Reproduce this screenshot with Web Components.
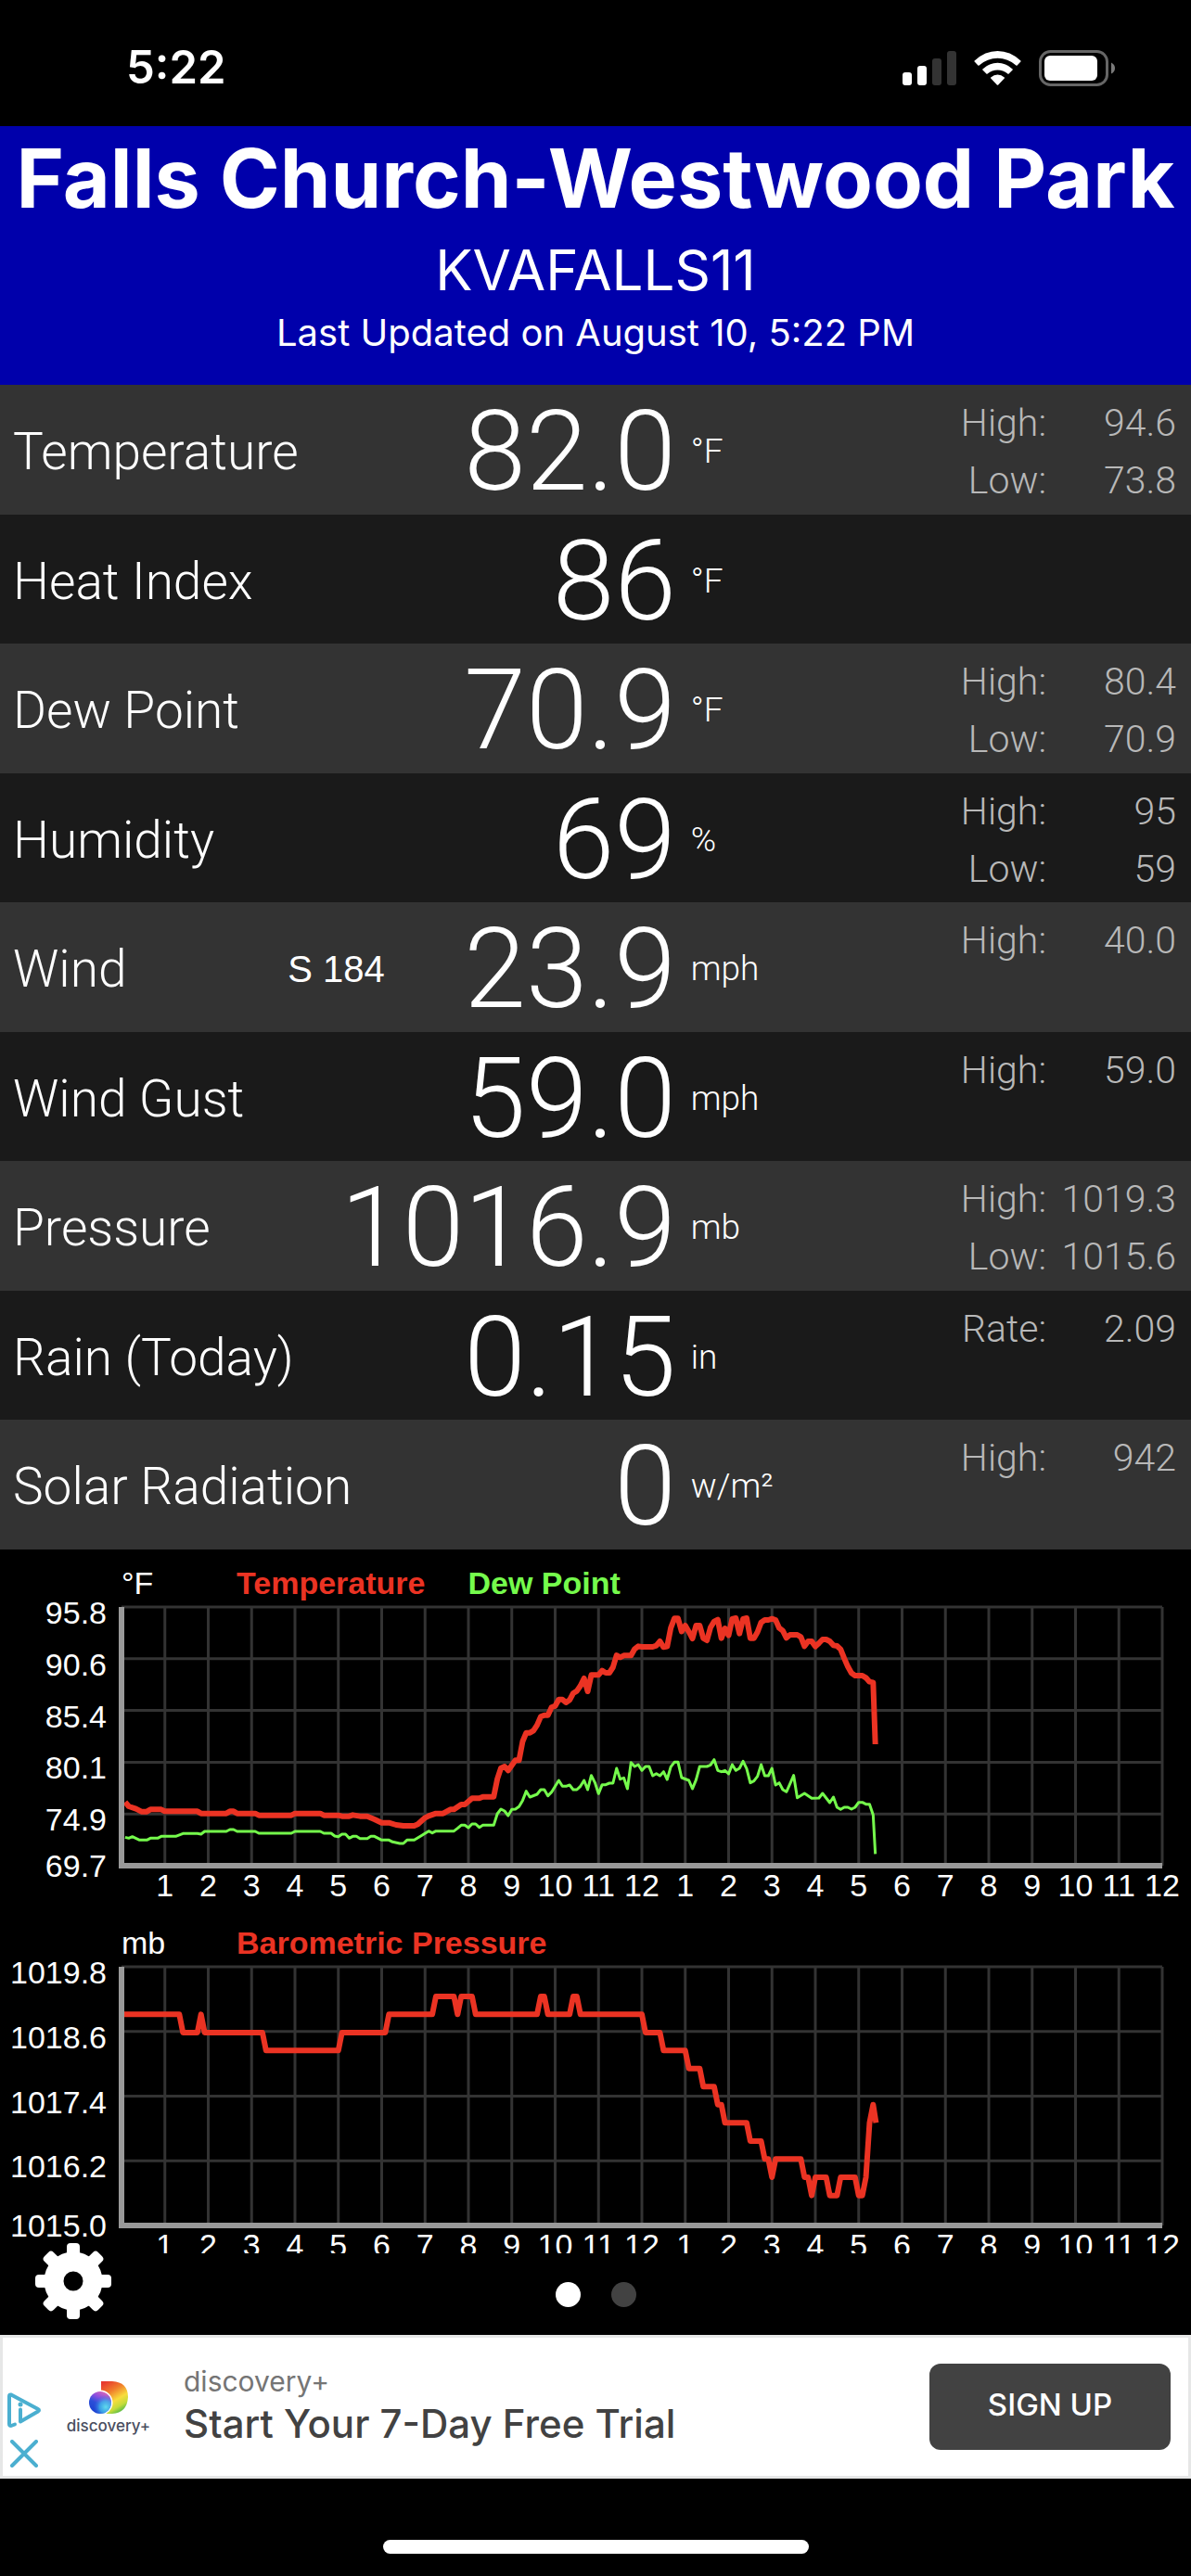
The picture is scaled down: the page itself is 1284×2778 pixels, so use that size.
<!DOCTYPE html>
<html lang="en">
<head>
<meta charset="utf-8">
<meta name="viewport" content="width=device-width, initial-scale=1">
<title>Weather Station</title>
<style>
  html, body { margin: 0; background: #000; }
  body { font-family: "Liberation Sans", sans-serif; color: #fff; }
</style>
</head>
<body>
<weather-app>
  <status-bar>5:22</status-bar>
  <station-header>
    <span slot="name">Falls Church-Westwood Park</span>
    <span slot="id">KVAFALLS11</span>
    <span slot="updated">Last Updated on August 10, 5:22 PM</span>
  </station-header>
  <reading-list>
    <reading-row label="Temperature" value="82.0" unit="°F" stats="High: 94.6|Low: 73.8"></reading-row>
    <reading-row label="Heat Index" value="86" unit="°F"></reading-row>
    <reading-row label="Dew Point" value="70.9" unit="°F" stats="High: 80.4|Low: 70.9"></reading-row>
    <reading-row label="Humidity" value="69" unit="%" stats="High: 95|Low: 59"></reading-row>
    <reading-row label="Wind" detail="S 184" value="23.9" unit="mph" stats="High: 40.0"></reading-row>
    <reading-row label="Wind Gust" value="59.0" unit="mph" stats="High: 59.0"></reading-row>
    <reading-row label="Pressure" value="1016.9" unit="mb" stats="High: 1019.3|Low: 1015.6"></reading-row>
    <reading-row label="Rain (Today)" value="0.15" unit="in" stats="Rate: 2.09"></reading-row>
    <reading-row label="Solar Radiation" value="0" unit="w/m²" stats="High: 942"></reading-row>
  </reading-list>
  <chart-stack>
    <day-chart unit="°F" ticks="95.8,90.6,85.4,80.1,74.9,69.7" series="temperature,dewPoint"></day-chart>
    <day-chart unit="mb" ticks="1019.8,1018.6,1017.4,1016.2,1015.0" series="pressure"></day-chart>
  </chart-stack>
  <page-controls></page-controls>
  <ad-banner>
    <span slot="brand">discovery+</span>
    <span slot="headline">Start Your 7-Day Free Trial</span>
    <span slot="action">SIGN UP</span>
  </ad-banner>
  <home-indicator></home-indicator>
</weather-app>

<script>
// Day series. Each pair is (five-minute sample index, depth below the top grid line in 1/837 of the plot height).
const SERIES = {
  temperature: { name: 'Temperature', color: '#eb3323', width: 6, points: '1,631 2,645 4,653 5.5,662 7,662 8,655 11,655 12,661 21,661 22,668 29,668 30,661 31,661 32,668 37,668 38,674 47,674 48,668 55,668 56,674 60,674 61,677 63,677 64,673 66,677 68,677 70,687 72,698 74,698 76,705 78,708 81,708 82,703 84,682 85,676 87,668 89,668 91,655 92,655 94,639 95,639 97,619 99,619 100,614 103,614 104,556 105,521 106,516 107,529 109,496 110,496 111,435 112,407 113,407 114,400 115,382 116,355 117,350 118,350 119,325 120,320 121,299 122,299 123,309 124,301 125,279 126,272 127,255 128,231 129,273 130,220 132,220 133,206 134,213 135,213 136,195 137,156 138,163 139,157 141,157 142,136 143,127 144,129 147,129 148,125 149,111 150,130 151,128 152,68 153,37 154,37 155,79 156,60 157,80 158,102 159,60 160,60 161,101 162,108 163,66 164,47 165,41 166,101 167,69 168,92 169,39 170,36 171,86 172,39 173,36 174,101 175,101 176,81 177,50 178,42 179,42 180,38 181,42 182,68 183,77 184,100 185,90 187,90 188,97 189,127 190,111 191,111 192,128 193,117 194,105 195,105 196,111 197,124 198,126 199,137 200,166 201,193 202,214 203,222 205,222 206,229 207,242 208,244 208.6,444' },
  dewPoint: { name: 'Dew Point', color: '#75fb4c', width: 3, points: '1,745 2,748 3,743 5,754 7,754 8,748 10,748 11,742 15,742 17,733 21,733 22,735 23,726 29,726 30,720 31,720 32,726 37,726 38,732 47,732 48,726 55,726 56,732 58,732 59,741 60,743 61,735 62,735 63,748 64,742 65,742 66,749 68,749 69,742 70,742 72,754 74,754 75,760 77,765 78,765 79,754 81,754 82.5,743 85,725 86,731 87,725 92,725 93,716 94,706 95,706 96,714 97,702 98,702 99,713 100,706 103,706 104,669 105,654 106,660 107,675 108,655 109,654 110,646 111,626 112,596 113,615 115,606 116,591 117,591 118,611 119,599 121,561 122,580 123,580 124,576 125,591 126,591 127,580 128,561 129,591 130,545 131,568 132,604 133,575 134,575 135,570 136,570 137,522 138,557 139,553 140,588 141,503 142,516 143,510 144,529 145,516 146,516 147,546 148,539 149,546 150,533 151,558 152,517 153,502 154,502 155,552 157,561 158,588 159,559 160,516 162,516 163,511 164,494 165,529 166,533 167,529 168,540 169,510 170,529 171,522 172,499 173,523 174,569 175,563 176,548 177,510 178,546 179,546 180,522 181,576 182,569 183,591 184,598 185,572 186,545 187,617 189,603 191,619 193,618 194,603 196,633 197,615 198,648 199,655 200,648 201,648 202,654 203,648 204,632 205,632 206,638 207,638 208,673 208.6,799' },
  pressure: { name: 'Barometric Pressure', color: '#eb3323', width: 6, points: '0,154 16,154 17,213 21,213 22,154 23,213 39,213 40,271 60,271 61,213 73,213 74,154 86,154 87,96 92,96 93,154 94,96 97,96 98,154 115,154 116,96 117,96 118,154 124,154 125,96 126,96 127,154 144,154 145,213 149,213 150,271 156,271 157,329 160,329 161,388 164,388 165,446 166,446 167,505 173,505 174,564 177,564 178,622 179,622 180,681 181,622 188,622 189,681 190,681 191,740 192,681 195,681 196,740 198,740 199,681 203,681 204,740 205,740 206,681 207,505 208,446 208.8,505' }
};

class BaseElement extends HTMLElement {
  connectedCallback() {
    if (!this.shadowRoot) this.attachShadow({ mode: 'open' }).innerHTML = this.render();
  }
}

customElements.define('weather-app', class extends BaseElement {
  render() {
    return `<style>
      :host { display: flex; flex-direction: column; min-height: 100vh; background: #000; }
    </style><slot></slot>`;
  }
});

customElements.define('status-bar', class extends BaseElement {
  render() {
    return `<style>
      :host { display: flex; align-items: center; justify-content: space-between; box-sizing: border-box;
        height: 136px; padding: 10px 82px 0 136px; background: #000; font: 600 49px/60px Inter, sans-serif; }
      svg { display: block; }
    </style>
    <span><slot></slot></span>
    <svg width="229" height="39" viewBox="0 0 229 39" role="img" aria-label="Signal, Wi-Fi, battery">
      <g fill="#fff">
        <rect x="0" y="24" width="10" height="14" rx="3"/>
        <rect x="16" y="17" width="10" height="21" rx="3"/>
        <rect x="32" y="9" width="10" height="29" rx="3" fill="#333"/>
        <rect x="48" y="1" width="10" height="37" rx="3" fill="#333"/>
        <path d="M77.6 11.4 Q89 1 102.500 1 Q116 1 127.400 11.400 Q127.900 12 127.400 12.600 L123.600 16.400 Q123 17 122.400 16.400 Q113.500 8.700 102.500 8.700 Q91.500 8.700 82.600 16.400 Q82 17 81.400 16.400 L77.600 12.600 Q77.100 12 77.600 11.400 Z"/>
        <path d="M86.400 20.400 Q93.600 13.800 102.500 13.800 Q111.400 13.800 118.600 20.400 Q119.200 21 118.600 21.600 L114.600 25.600 Q114 26.200 113.400 25.600 Q108.500 21.400 102.500 21.400 Q96.500 21.400 91.600 25.600 Q91 26.200 90.400 25.600 L86.400 21.600 Q85.800 21 86.400 20.400 Z"/>
        <path d="M95.200 29.400 Q98.500 26.500 102.500 26.500 Q106.500 26.500 109.800 29.400 Q110.400 30 109.800 30.600 L103.200 37.400 Q102.500 38.100 101.800 37.400 L95.200 30.600 Q94.600 30 95.200 29.400 Z"/>
        <rect x="153" y="6" width="57" height="27" rx="6"/>
      </g>
      <rect x="148.500" y="1.500" width="72" height="36" rx="11" fill="none" stroke="#666" stroke-width="3"/>
      <path d="M225 13.500 Q229 15.500 229 19.500 Q229 23.500 225 25.500 Z" fill="#7a7a7a"/>
    </svg>`;
  }
});

customElements.define('station-header', class extends BaseElement {
  render() {
    return `<style>
      :host { display: block; background: #0000ab; padding-bottom: 31px; text-align: center; white-space: nowrap;
        font-family: Inter, sans-serif; }
      h1, h2, p { margin: 0; font-weight: 400; }
      h1 { font-weight: 700; font-size: 88px; line-height: 112px; }
      h2 { font-size: 60px; line-height: 86px; }
      p { font-size: 40px; line-height: 50px; }
    </style>
    <h1><slot name="name"></slot></h1>
    <h2><slot name="id"></slot></h2>
    <p><slot name="updated"></slot></p>`;
  }
});

customElements.define('reading-list', class extends BaseElement {
  render() {
    return `<style>
      :host { display: block; }
      ::slotted(:nth-child(odd)) { --row-bg: #333; --row-height: 140px; }
      ::slotted(:nth-child(even)) { --row-bg: #1a1a1a; --row-height: 139px; }
    </style><slot></slot>`;
  }
});

customElements.define('reading-row', class extends BaseElement {
  render() {
    const a = n => this.getAttribute(n) || '';
    const stats = a('stats').split('|').filter(Boolean).map(s => {
      const [k, v] = s.split(' ');
      return `<dt>${k}</dt><dd>${v}</dd>`;
    }).join('');
    return `<style>
      :host { display: flex; align-items: center; box-sizing: border-box; height: var(--row-height);
        padding: 4px 16px 0 14px; background: var(--row-bg); font-family: Roboto, "Liberation Sans", sans-serif; font-weight: 300; }
      .main { display: flex; align-items: center; width: 57%; }
      .label { font-size: 55px; line-height: 64px; white-space: nowrap; }
      .detail { margin-left: auto; font: 400 40px/48px "Liberation Sans", sans-serif; white-space: nowrap; }
      .value { min-width: 230px; margin-left: auto; font-size: 120px; line-height: 136px; text-align: right; }
      .detail + .value { margin-left: 84px; }
      .unit { flex: 1; padding-left: 16px; font-size: 37px; line-height: 46px; }
      dl { align-self: flex-start; display: grid; grid-template-columns: auto 140px; margin: 0; padding-top: 6px;
        font-size: 41px; line-height: 62px; text-align: right; color: #b8b8b8; }
      dd { margin: 0; }
    </style>
    <div class="main">
      <span class="label">${a('label')}</span>
      ${a('detail') ? `<span class="detail">${a('detail')}</span>` : ''}
      <span class="value">${a('value')}</span>
    </div>
    <span class="unit">${a('unit')}</span>
    <dl>${stats}</dl>`;
  }
});

customElements.define('chart-stack', class extends BaseElement {
  render() {
    return `<style>
      :host { display: block; overflow: hidden; background: #000; }
      ::slotted(*) { margin-bottom: 5px; }
      ::slotted(:last-child) { margin-bottom: -12px; }
    </style><slot></slot>`;
  }
});

customElements.define('day-chart', class extends BaseElement {
  render() {
    const ticks = this.getAttribute('ticks').split(',');
    const series = this.getAttribute('series').split(',').map(k => SERIES[k]);
    const hours = Array.from({ length: 24 }, (_, i) => i % 12 + 1);
    const rows = ticks.length - 1;
    let grid = '';
    for (let h = 1; h <= 24; h++) grid += `M${h * 12} 0V837`;
    for (let r = 0; r < rows; r++) grid += `M0 ${r * 837 / rows}H288`;
    return `<style>
      :host { display: grid; grid-template-columns: 131px 1fr; padding: 14px 31px 0 0; font-size: 34px; line-height: 44px; }
      .legend { grid-column: 2; display: flex; padding-bottom: 4px; }
      .legend span { min-width: 124px; }
      .legend b { margin-right: 46px; }
      .ticks { grid-column: 1; display: flex; flex-direction: column; padding-right: 16px; text-align: right; }
      .ticks div { flex: 1 1 0; min-height: 0; display: flex; justify-content: flex-end; }
      .ticks span { line-height: 0; padding-top: 6px; align-self: flex-start; }
      .ticks div:last-child { flex: 0 0 0; height: 0; }
      .ticks div:last-child span { padding-top: 0; }
      svg { display: block; width: 100%; height: 279px; overflow: visible; }
      path, polyline { fill: none; vector-effect: non-scaling-stroke; }
      .hours { grid-column: 2; display: grid; grid-template-columns: repeat(24, 1fr); line-height: 42px; }
      .hours span { justify-self: end; width: 0; display: flex; justify-content: center; }
    </style>
    <div class="legend"><span>${this.getAttribute('unit')}</span>${series.map(s => `<b style="color:${s.color}">${s.name}</b>`).join('')}</div>
    <div class="ticks">${ticks.map(t => `<div><span>${t}</span></div>`).join('')}</div>
    <svg viewBox="0 0 288 837" preserveAspectRatio="none" aria-hidden="true">
      <path d="${grid}" stroke="#333" stroke-width="3"/>
      ${series.map(s => `<polyline points="${s.points}" stroke="${s.color}" stroke-width="${s.width}" stroke-linejoin="round"/>`).join('')}
      <path d="M0 0V837H288" stroke="#999" stroke-width="6"/>
    </svg>
    <div class="hours">${hours.map(h => `<span>${h}</span>`).join('')}</div>`;
  }
});

customElements.define('page-controls', class extends BaseElement {
  render() {
    const teeth = [0, 45, 90, 135, 180, 225, 270, 315].map(d => `<rect x="-7" y="-41" width="14" height="20" rx="4" transform="rotate(${d})"/>`).join('');
    return `<style>
      :host { position: relative; display: grid; grid-template-columns: 1fr auto 1fr; box-sizing: border-box;
        height: 100px; margin-top: -12px; padding: 0 37px; }
      button { padding: 0; border: 0; background: none; cursor: pointer; }
      .settings { width: 84px; height: 84px; }
      svg { display: block; }
      nav { align-self: end; display: flex; gap: 33px; padding-bottom: 30px; }
      .dot { width: 27px; height: 27px; border-radius: 50%; background: #424242; }
      .dot[aria-current] { background: #fff; }
    </style>
    <button class="settings" aria-label="Settings">
      <svg width="84" height="84" viewBox="-42 -42 84 84"><g fill="#fff">${teeth}</g>
      <circle r="21" fill="none" stroke="#fff" stroke-width="21"/></svg>
    </button>
    <nav><button class="dot" aria-label="Page 1" aria-current="page"></button><button class="dot" aria-label="Page 2"></button></nav>`;
  }
});

customElements.define('ad-banner', class extends BaseElement {
  render() {
    return `<style>
      :host { display: flex; align-items: center; box-sizing: border-box; height: 155px; background: #fff;
        border: 3px solid #e6e7e7; padding: 0 19px 0 5px; font-family: Inter, sans-serif; }
      .choices { display: flex; flex-direction: column; gap: 13px; width: 36px; padding-top: 59px; align-self: flex-start; align-items: center; }
      button { border: 0; padding: 0; background: none; cursor: pointer; }
      svg { display: block; }
      .logo { display: flex; flex-direction: column; align-items: center; width: 94px; margin-left: 26px; padding-top: 4px;
        color: #4a4e60; font-size: 17px; line-height: 24px; font-weight: 500; }
      .copy { flex: 1; margin-left: 34px; padding-bottom: 6px; display: flex; flex-direction: column; white-space: nowrap; }
      .brand { color: #757575; font-size: 30px; line-height: 42px; }
      .headline { color: #424242; font-size: 42px; line-height: 50px; font-weight: 500; }
      .action { width: 260px; height: 93px; padding-bottom: 6px; border-radius: 12px; background: #424242; color: #fff;
        font: 500 33px/40px Inter, sans-serif; }
    </style>
    <div class="choices">
      <button aria-label="Ad choices"><svg width="36" height="38" viewBox="0 0 36 38" fill="none" stroke="#4bafd0" stroke-width="4" stroke-linecap="round" stroke-linejoin="round">
        <path d="M8 34.500 L4 36 Q2 36 2 34 V4 Q2 2 4 2.500 L33 18 Q35 19 33 20.500 L14 31.500 V18.500"/><circle cx="14" cy="13" r="2.500" fill="#4bafd0" stroke="none"/></svg></button>
      <button aria-label="Close ad"><svg width="30" height="30" viewBox="0 0 30 30" stroke="#4bafd0" stroke-width="4" stroke-linecap="round"><path d="M2 2 L28 28 M28 2 L2 28"/></svg></button>
    </div>
    <div class="logo">
      <svg width="42" height="36" viewBox="0 0 42 36" aria-hidden="true">
        <defs>
          <linearGradient id="d" x1="0.200" y1="0" x2="0.700" y2="1"><stop offset="0" stop-color="#e8392e"/><stop offset=".3" stop-color="#f07a2c"/><stop offset=".6" stop-color="#f8dc3c"/><stop offset=".8" stop-color="#c5dc3a"/><stop offset="1" stop-color="#3fb548"/></linearGradient>
          <linearGradient id="g" x1="0.800" y1="0" x2="0.300" y2="1"><stop offset="0" stop-color="#e86ab0"/><stop offset=".35" stop-color="#8a4fe0"/><stop offset=".6" stop-color="#2c4fd8"/><stop offset="1" stop-color="#1a3fd0"/></linearGradient>
          <radialGradient id="c" cx=".75" cy=".7" r=".55"><stop offset="0" stop-color="#62dcec"/><stop offset=".5" stop-color="#3fb4ea" stop-opacity=".8"/><stop offset="1" stop-color="#3060e0" stop-opacity="0"/></radialGradient>
        </defs>
        <path d="M13 0 H25 Q42 1 42 17 Q41 34 25 35 H13 Z" fill="url(#d)"/>
        <circle cx="12" cy="23" r="13.500" fill="#fff"/>
        <circle cx="12" cy="23" r="12" fill="url(#g)"/><circle cx="12" cy="23" r="12" fill="url(#c)"/>
      </svg>
      <span>discovery+</span>
    </div>
    <div class="copy">
      <span class="brand"><slot name="brand"></slot></span>
      <span class="headline"><slot name="headline"></slot></span>
    </div>
    <button class="action"><slot name="action"></slot></button>`;
  }
});

customElements.define('home-indicator', class extends BaseElement {
  render() {
    return `<style>
      :host { display: flex; justify-content: center; padding: 66px 0 24px; }
      div { width: 459px; height: 15px; border-radius: 8px; background: #fff; }
    </style><div></div>`;
  }
});
</script>
</body>
</html>
